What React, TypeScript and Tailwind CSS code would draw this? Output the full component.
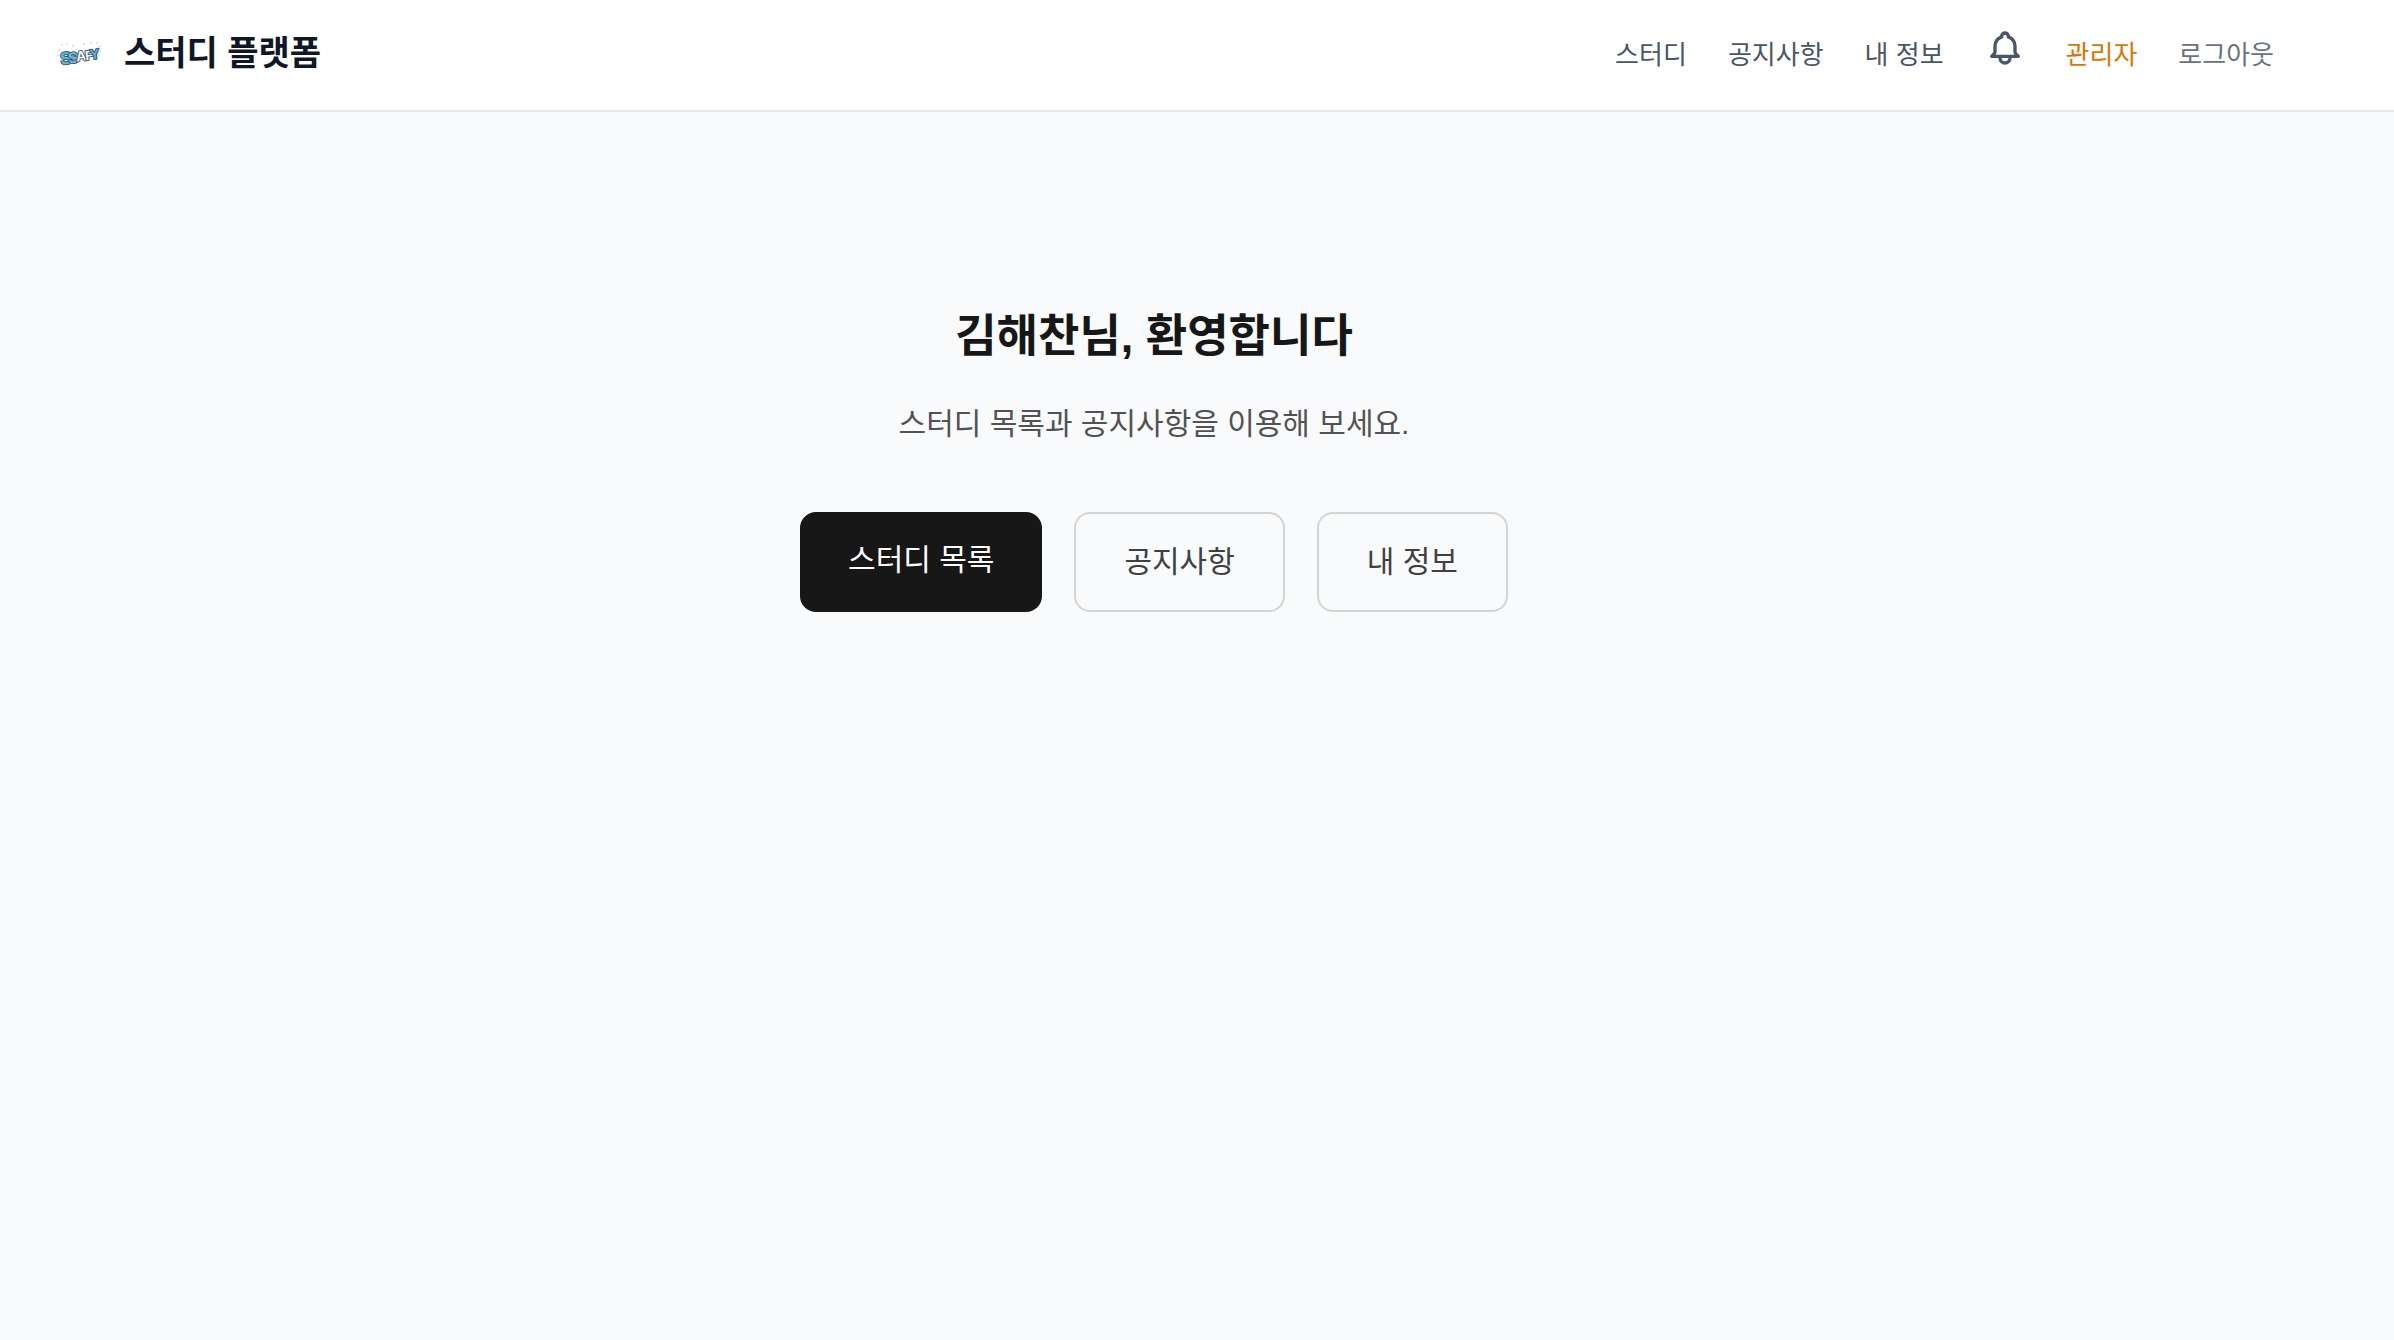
const navLinks = [
  { label: "스터디", href: "#studies" },
  { label: "공지사항", href: "#notices" },
  { label: "내 정보", href: "#me" },
];

function Logo() {
  return (
    <svg viewBox="0 0 48 48" className="size-12" role="img" aria-label="SSAFY">
      <g fill="#bfe6f7">
        <circle cx="3" cy="19" r="1" />
        <circle cx="6" cy="14" r="1" />
        <circle cx="11" cy="13" r="1" />
        <circle cx="2" cy="24" r="1" />
        <circle cx="4" cy="29" r="1" />
        <circle cx="17" cy="15" r="1" />
        <circle cx="28" cy="13" r="1" />
        <circle cx="35" cy="12" r="1" />
        <circle cx="41" cy="12" r="1" />
        <circle cx="44" cy="15" r="1" />
        <circle cx="45" cy="20" r="1" />
        <circle cx="43" cy="24" r="1" />
      </g>
      <g
        transform="rotate(-8 24 24)"
        fontFamily="Liberation Sans, Arial, sans-serif"
        fontWeight="bold"
        stroke="#47576a"
        strokeWidth="2"
        strokeLinejoin="round"
        paintOrder="stroke"
      >
        <text x="4" y="31" fontSize="17" fill="#5bbbe4">S</text>
        <text x="12" y="31" fontSize="15" fill="#6cc5ea">S</text>
        <text x="20" y="30" fontSize="14" fill="#ffffff">A</text>
        <text x="29" y="30" fontSize="13" fill="#e8f6fc">F</text>
        <text x="34" y="30" fontSize="14" fill="#4fb3e0">Y</text>
      </g>
    </svg>
  );
}

function BellIcon() {
  return (
    <svg viewBox="0 0 24 24" className="size-10" fill="none" stroke="currentColor" strokeWidth="2" aria-hidden="true">
      <path
        strokeLinecap="round"
        strokeLinejoin="round"
        d="M15 17h5l-1.405-1.405A2.032 2.032 0 0118 14.158V11a6.002 6.002 0 00-4-5.659V5a2 2 0 10-4 0v.341C7.67 6.165 6 8.388 6 11v3.159c0 .538-.214 1.055-.595 1.436L4 17h5m6 0v1a3 3 0 11-6 0v-1m6 0H9"
      />
    </svg>
  );
}

function Header() {
  return (
    <header className="flex h-28 items-center justify-between border-b-2 border-gray-200 bg-white pr-30 pl-14">
      <a href="#home" className="flex items-center gap-5 text-[34px] leading-12 font-bold text-gray-900">
        <Logo />
        <span className="pb-1">스터디 플랫폼</span>
      </a>
      <nav className="flex items-center gap-[41px] text-[26px] leading-10 text-gray-600">
        {navLinks.map((link) => (
          <a key={link.href} href={link.href}>
            {link.label}
          </a>
        ))}
        <button type="button" aria-label="알림" className="flex h-[54px] items-start">
          <BellIcon />
        </button>
        <a href="#admin" className="text-[#d97706]">
          관리자
        </a>
        <button type="button" className="text-gray-500">
          로그아웃
        </button>
      </nav>
    </header>
  );
}

export default function App() {
  return (
    <div className="min-h-screen bg-gray-50 font-['Liberation_Sans','Noto_Sans_CJK_KR',sans-serif]">
      <Header />
      <main className="flex flex-col items-center py-48 pr-[86px] text-center">
        <h1 className="text-[45px] leading-[66px] font-bold text-neutral-900">김해찬님, 환영합니다</h1>
        <p className="mt-[30px] text-[30px] leading-12 text-neutral-600">스터디 목록과 공지사항을 이용해 보세요.</p>
        <div className="mt-16 flex gap-8 text-[30px] leading-12">
          <a href="#studies" className="rounded-2xl bg-neutral-900 px-12 py-6 text-white">
            스터디 목록
          </a>
          <a href="#notices" className="rounded-2xl border-2 border-neutral-300 px-12 py-6 text-neutral-700">
            공지사항
          </a>
          <a href="#me" className="rounded-2xl border-2 border-neutral-300 px-12 py-6 text-neutral-700">
            내 정보
          </a>
        </div>
      </main>
    </div>
  );
}
